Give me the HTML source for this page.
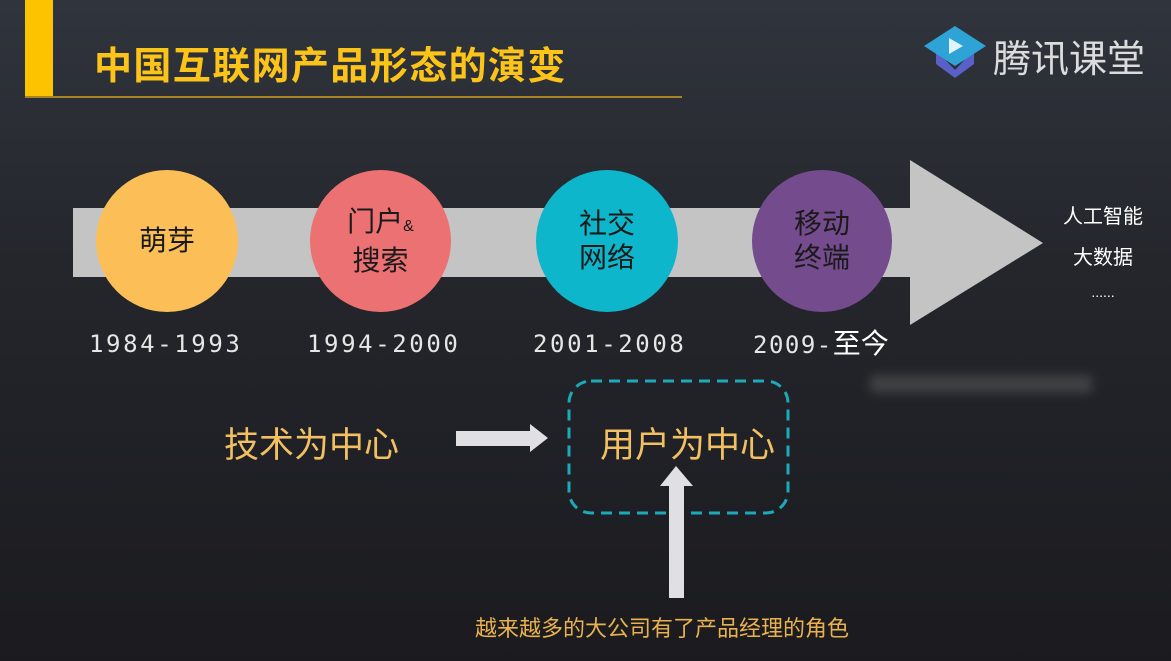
<!DOCTYPE html>
<html><head><meta charset="utf-8"><style>
body{margin:0;width:1171px;height:661px;overflow:hidden;background:linear-gradient(180deg,#30343c 0%,#24262c 40%,#1b1b1f 100%);font-family:"Liberation Sans","Noto Sans CJK SC",sans-serif;position:relative}
.a{position:absolute}
.c{position:absolute;border-radius:50%;display:flex;align-items:center;justify-content:center;text-align:center;color:#1a1a1a;font-size:28px;line-height:34px}
.d{position:absolute;top:330px;font-family:"DejaVu Sans Mono","Liberation Mono",monospace;font-size:24px;line-height:28px;color:#e6e6e6;letter-spacing:2.6px;white-space:nowrap}
.r{position:absolute;color:#fff;font-size:20px;width:120px;text-align:center;left:1043px}
</style></head><body>
<div class="a" style="left:25px;top:0;width:28px;height:97px;background:#fdc200"></div>
<div class="a" style="left:25px;top:96px;width:657px;height:2px;background:#a58525"></div>
<div class="a" style="left:94px;top:35px;font-size:38px;font-weight:bold;color:#fcc419;letter-spacing:1.4px">中国互联网产品形态的演变</div>
<svg class="a" style="left:922px;top:22px" width="66" height="58" viewBox="0 0 66 58">
<path d="M14 28 L33 48 L52 28 L52 42 L33 56 L14 42Z" fill="#5960c8"/>
<path d="M2 24 L33 4 L64 24 L33 44Z" fill="#2ea3d6"/>
<path d="M27 16 L27 32 L41 24Z" fill="#dff4ff"/>
</svg>
<div class="a" style="left:993px;top:28px;font-size:38px;color:#dcdcdc">腾讯课堂</div>
<svg class="a" style="left:0;top:0" width="1171" height="661">
<path d="M73 208 L910 208 L910 160 L1043 243 L910 325 L910 277 L73 277Z" fill="#c4c4c4"/>
</svg>
<div class="c" style="left:96px;top:170px;width:142px;height:142px;background:#fcbf58">萌芽</div>
<div class="c" style="left:310px;top:170px;width:141px;height:142px;background:#ec7172"><div>门户<span style="font-size:16px">&amp;</span><br>搜索</div></div>
<div class="c" style="left:536px;top:170px;width:142px;height:142px;background:#0db6ca">社交<br>网络</div>
<div class="c" style="left:752px;top:170px;width:140px;height:142px;background:#744b8d">移动<br>终端</div>
<div class="d" style="left:89px">1984-1993</div>
<div class="d" style="left:307px">1994-2000</div>
<div class="d" style="left:533px">2001-2008</div>
<div class="d" style="left:753px;letter-spacing:1.5px">2009-<span style="font-family:'Liberation Sans','Noto Sans CJK SC',sans-serif;font-size:28px;line-height:28px;color:#fff;letter-spacing:0">至今</span></div>
<div class="r" style="top:200px">人工智能</div>
<div class="r" style="top:241px">大数据</div>
<div class="r" style="top:284px;font-size:14px">......</div>
<div class="a" style="left:870px;top:375px;width:222px;height:18px;background:#555;filter:blur(5px);opacity:.6"></div>
<div class="a" style="left:224px;top:417px;font-size:35px;color:#f2c062">技术为中心</div>
<svg class="a" style="left:0;top:0" width="1171" height="661">
<path d="M456 431 L530 431 L530 424 L548 438 L530 452 L530 446 L456 446Z" fill="#e0e0e4"/>
<rect x="569" y="381" width="219" height="132" rx="22" fill="none" stroke="#1ea9b9" stroke-width="3" stroke-dasharray="11 7"/>
<path d="M669 598 L669 486 L660 486 L676 466 L693 486 L684 486 L684 598Z" fill="#e0e0e4"/>
</svg>
<div class="a" style="left:600px;top:417px;font-size:35px;color:#f2c062">用户为中心</div>
<div class="a" style="left:475px;top:611px;font-size:22px;color:#eab24e">越来越多的大公司有了产品经理的角色</div>
</body></html>
